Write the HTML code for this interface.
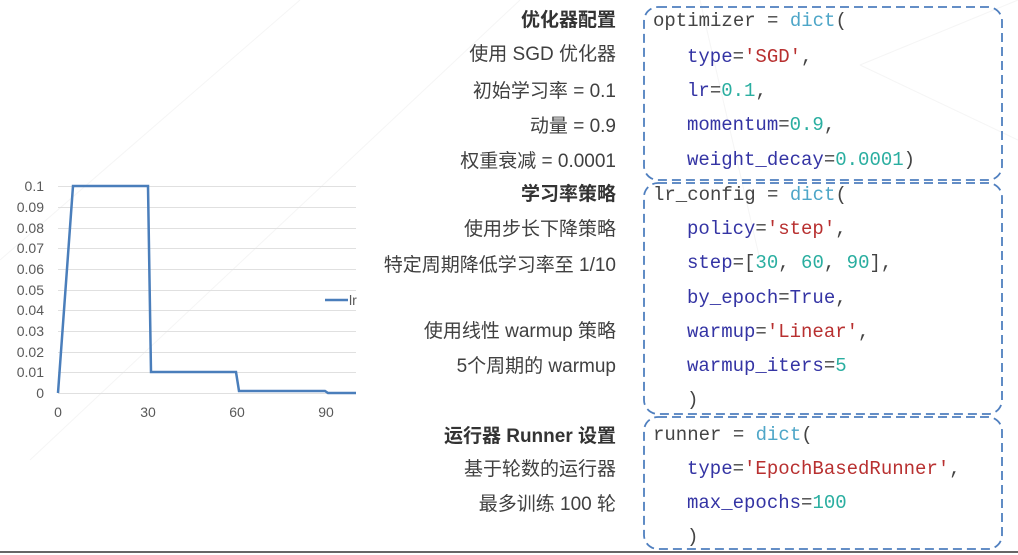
<!DOCTYPE html>
<html><head><meta charset="utf-8"><style>
body{margin:0;width:1018px;height:555px;background:#fff;position:relative;overflow:hidden;font-family:"Liberation Sans","Noto Sans CJK SC",sans-serif;}
.l{position:absolute;right:402px;font-size:19px;color:#404040;white-space:nowrap;line-height:20px;}
.b{font-weight:bold;color:#333;}
.c{position:absolute;left:653px;font-family:"Liberation Mono",monospace;font-size:19px;color:#444;white-space:pre;line-height:20px;}
.i{left:687px}
.p{color:#3434a4}.s{color:#b83030}.n{color:#2aaea0}.d{color:#4ea6c8}
</style></head><body>
<svg width="1018" height="555" style="position:absolute;left:0;top:0">
<g stroke="#f5f5f5" stroke-width="1" fill="none">
<line x1="0" y1="260" x2="300" y2="0"/><line x1="860" y1="65" x2="1018" y2="0"/><line x1="860" y1="65" x2="1018" y2="140"/><line x1="700" y1="0" x2="760" y2="260"/><line x1="30" y1="460" x2="520" y2="0"/>
</g>
<g stroke="#e0e0e0" stroke-width="1">
<line x1="58" y1="186.5" x2="356" y2="186.5"/><line x1="58" y1="207.5" x2="356" y2="207.5"/><line x1="58" y1="228.5" x2="356" y2="228.5"/><line x1="58" y1="248.5" x2="356" y2="248.5"/><line x1="58" y1="269.5" x2="356" y2="269.5"/><line x1="58" y1="290.5" x2="356" y2="290.5"/><line x1="58" y1="310.5" x2="356" y2="310.5"/><line x1="58" y1="331.5" x2="356" y2="331.5"/><line x1="58" y1="352.5" x2="356" y2="352.5"/><line x1="58" y1="372.5" x2="356" y2="372.5"/><line x1="58" y1="393.5" x2="356" y2="393.5"/>
</g>
<polyline fill="none" stroke="#4a7ebb" stroke-width="2.5" points="58,393 73,186 148,186 151,372 236,372 239,391 325,391 328,393 356,393"/>
<line x1="325" y1="300" x2="348" y2="300" stroke="#4a7ebb" stroke-width="2.5"/>
<g fill="none" stroke="#4f7fbf" stroke-width="1.8" stroke-dasharray="9,5">
<rect x="644" y="7" width="358" height="173" rx="14"/>
<rect x="644" y="183" width="358" height="231" rx="14"/>
<rect x="644" y="417" width="358" height="132" rx="14"/>
</g>
<line x1="0" y1="552" x2="1018" y2="552" stroke="#666" stroke-width="2"/>
<g font-family="Liberation Sans,sans-serif" font-size="14" fill="#595959" text-anchor="end">
<text x="44" y="191">0.1</text><text x="44" y="212">0.09</text><text x="44" y="233">0.08</text><text x="44" y="253">0.07</text><text x="44" y="274">0.06</text><text x="44" y="295">0.05</text><text x="44" y="315">0.04</text><text x="44" y="336">0.03</text><text x="44" y="357">0.02</text><text x="44" y="377">0.01</text><text x="44" y="398">0</text>
</g>
<g font-family="Liberation Sans,sans-serif" font-size="14" fill="#595959" text-anchor="middle">
<text x="58" y="417">0</text><text x="148" y="417">30</text><text x="237" y="417">60</text><text x="326" y="417">90</text>
</g>
<text x="349" y="305" font-family="Liberation Sans,sans-serif" font-size="14" fill="#595959">lr</text>
</svg>
<div class="l b" style="top:11px">优化器配置</div>
<div class="l" style="top:45px">使用 SGD 优化器</div>
<div class="l" style="top:82px">初始学习率 = 0.1</div>
<div class="l" style="top:117px">动量 = 0.9</div>
<div class="l" style="top:152px">权重衰减 = 0.0001</div>
<div class="l b" style="top:185px">学习率策略</div>
<div class="l" style="top:220px">使用步长下降策略</div>
<div class="l" style="top:256px">特定周期降低学习率至 1/10</div>
<div class="l" style="top:322px">使用线性 warmup 策略</div>
<div class="l" style="top:357px">5个周期的 warmup</div>
<div class="l b" style="top:427px">运行器 Runner 设置</div>
<div class="l" style="top:460px">基于轮数的运行器</div>
<div class="l" style="top:495px">最多训练 100 轮</div>

<div class="c" style="top:11px">optimizer = <span class="d">dict</span>(</div>
<div class="c i" style="top:47px"><span class="p">type</span>=<span class="s">'SGD'</span>,</div>
<div class="c i" style="top:81px"><span class="p">lr</span>=<span class="n">0.1</span>,</div>
<div class="c i" style="top:115px"><span class="p">momentum</span>=<span class="n">0.9</span>,</div>
<div class="c i" style="top:150px"><span class="p">weight_decay</span>=<span class="n">0.0001</span>)</div>
<div class="c" style="top:185px">lr_config = <span class="d">dict</span>(</div>
<div class="c i" style="top:219px"><span class="p">policy</span>=<span class="s">'step'</span>,</div>
<div class="c i" style="top:253px"><span class="p">step</span>=[<span class="n">30</span>, <span class="n">60</span>, <span class="n">90</span>],</div>
<div class="c i" style="top:288px"><span class="p">by_epoch</span>=<span class="p">True</span>,</div>
<div class="c i" style="top:322px"><span class="p">warmup</span>=<span class="s">'Linear'</span>,</div>
<div class="c i" style="top:356px"><span class="p">warmup_iters</span>=<span class="n">5</span></div>
<div class="c i" style="top:390px">)</div>
<div class="c" style="top:425px">runner = <span class="d">dict</span>(</div>
<div class="c i" style="top:459px"><span class="p">type</span>=<span class="s">'EpochBasedRunner'</span>,</div>
<div class="c i" style="top:493px"><span class="p">max_epochs</span>=<span class="n">100</span></div>
<div class="c i" style="top:527px">)</div>
</body></html>
